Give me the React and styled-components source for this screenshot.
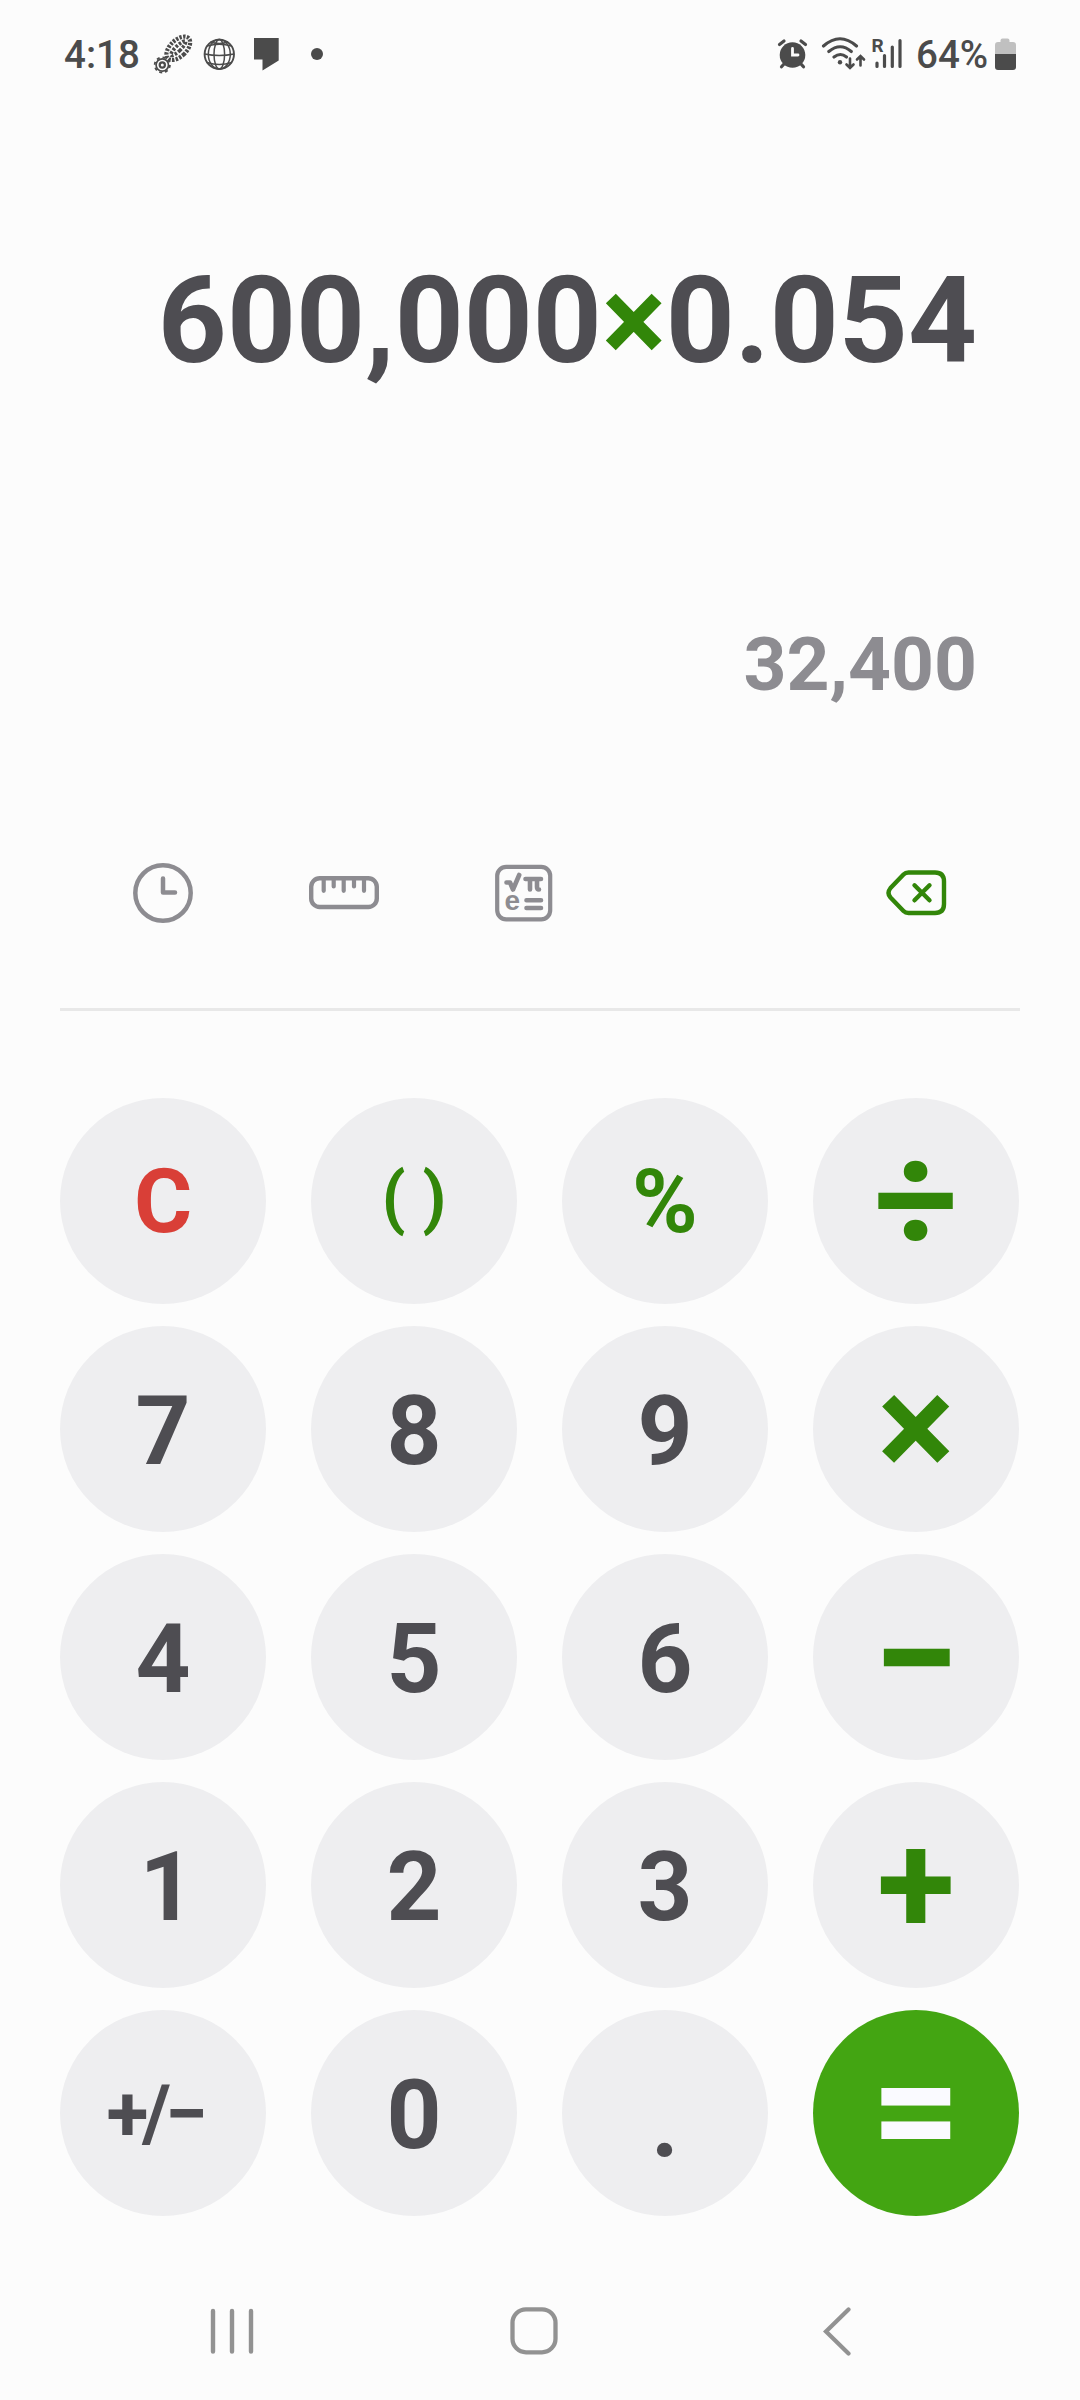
import styled, { createGlobalStyle } from 'styled-components'

const colors = {
  page: '#fcfcfc',
  key: '#eeeef0',
  ink: '#4e4d52',
  status: '#4b4b4b',
  muted: '#8d8c91',
  nav: '#929292',
  green: '#328609',
  equals: '#43a512',
  red: '#d93f37',
  line: '#e8e8e8',
}

const GlobalStyle = createGlobalStyle`
  * {
    box-sizing: border-box;
  }
  body {
    margin: 0;
    background: ${colors.page};
    font-family: Roboto, sans-serif;
  }
  svg {
    display: block;
    flex: none;
  }
`

const Screen = styled.main`
  display: flex;
  flex-direction: column;
  width: 1080px;
  height: 2400px;
  overflow: hidden;
  background: ${colors.page};
`

const StatusBar = styled.header`
  display: flex;
  justify-content: space-between;
  height: 108px;
  padding: 30px 64px 0;
  color: ${colors.status};
`

const StatusGroup = styled.div`
  display: flex;
  height: 48px;
`

const StatusText = styled.span`
  width: ${({ $width }) => $width}px;
  font-size: 38.5px;
  font-weight: 500;
  line-height: 49px;
  white-space: nowrap;
`

const Display = styled.section`
  height: 720px;
  padding: 138px 103px 0 0;
  text-align: right;
  font-weight: 700;
`

const Expression = styled.div`
  height: 150px;
  font-size: 120.4px;
  line-height: 150px;
  color: ${colors.ink};
`

const Operator = styled.span`
  color: ${colors.green};
`

const Result = styled.div`
  margin-top: 218px;
  font-size: 75px;
  line-height: 100px;
  color: ${colors.muted};
`

const Toolbar = styled.div`
  display: flex;
  align-items: center;
  height: 130px;
  padding: 0 126px;
`

const Tool = styled.button`
  display: flex;
  align-items: center;
  justify-content: center;
  width: 74px;
  height: 74px;
  margin: 0 ${({ $gap }) => $gap || 0}px 0 0;
  padding: 0;
  border: 0;
  background: none;
  color: ${({ $accent }) => ($accent ? colors.green : colors.muted)};

  &:last-child {
    margin-left: auto;
  }
`

const Divider = styled.hr`
  width: 960px;
  height: 3px;
  margin: 50px auto 87px;
  border: 0;
  background: ${colors.line};
`

const Keypad = styled.div`
  display: grid;
  grid-template-columns: repeat(4, 206px);
  grid-auto-rows: 206px;
  gap: 22px 45px;
  padding-left: 60px;
`

const Key = styled.button`
  display: flex;
  justify-content: center;
  padding: 0;
  border: 0;
  border-radius: 50%;
  background: ${({ $fill }) => $fill || colors.key};
  color: ${({ $color }) => $color || colors.ink};
  font-family: inherit;
  font-size: ${({ $size }) => $size || 96}px;
  font-weight: 700;
  letter-spacing: ${({ $spacing }) => $spacing || 0}px;
  text-indent: ${({ $indent }) => $indent || 0}px;
  line-height: ${({ $line }) => $line || 210}px;
  white-space: pre;
`

const NavBar = styled.nav`
  display: flex;
  align-items: center;
  justify-content: space-between;
  height: 50px;
  margin-top: 90px;
  padding: 0 228px 0 210px;
  color: ${colors.nav};
`

const KEYS = [
  { label: 'C', color: colors.red, size: 89, line: 208 },
  { label: '( )', color: colors.green, size: 68, line: 201 },
  { label: '%', color: colors.green, size: 89, line: 208 },
  { label: '÷', color: colors.green, size: 148, line: 205 },
  { label: '7' },
  { label: '8' },
  { label: '9' },
  { label: '×', color: colors.green, size: 145, line: 203 },
  { label: '4' },
  { label: '5' },
  { label: '6' },
  { label: '−', color: colors.green, size: 156, line: 210 },
  { label: '1', indent: 8 },
  { label: '2' },
  { label: '3' },
  { label: '+', color: colors.green, size: 143, line: 205 },
  { label: '+/−', size: 77, line: 208, spacing: -6, indent: -18 },
  { label: '0' },
  { label: '.', line: 226 },
  { label: '=', color: '#fafaff', fill: colors.equals, size: 157, line: 201 },
]

const NotificationIcons = () => (
  <svg width="186" height="48" viewBox="148 30 186 48" fill="none" stroke="currentColor">
    {/* boot print */}
    <g transform="translate(178.300 48.300) rotate(46)">
      <ellipse rx="8.200" ry="14.500" strokeWidth="4.200" strokeDasharray="2.400 1.300" />
      <ellipse rx="2.600" ry="10" strokeWidth="3.600" strokeDasharray="2.600 1.500" />
    </g>
    {/* gear */}
    <circle cx="162.300" cy="65" r="6.200" strokeWidth="1.700" />
    <circle cx="162.300" cy="65" r="7.600" strokeWidth="1.800" strokeDasharray="3 2.970" />
    <circle cx="162.300" cy="65" r="2.600" strokeWidth="2.200" />
    {/* globe */}
    <g strokeWidth="1.500">
      <circle cx="219.300" cy="54.300" r="14.700" strokeWidth="1.900" />
      <ellipse cx="219.300" cy="54.300" rx="5.300" ry="14.700" />
      <ellipse cx="219.300" cy="54.300" rx="11" ry="14.700" />
      <path d="M204.600 54q14.700 3 29.400 0M207 46q12.300-3.500 24.600 0M207 62.500q12.300 4 24.600 0M210.500 42q8.800 3 17.600 0" />
    </g>
    <path d="M254 38h24.700v22.500L262.500 70.500V59.500H254z" fill="currentColor" stroke="none" />
    <circle cx="317" cy="54" r="6" fill="currentColor" stroke="none" />
  </svg>
)

const SystemIcons = () => (
  <svg width="142" height="48" viewBox="774 30 142 48" fill="none" stroke="currentColor" strokeLinecap="round">
    {/* alarm */}
    <circle cx="792.500" cy="55" r="12.800" fill="currentColor" stroke="none" />
    <path d="M779.500 44.500l4.500-3.500M805.500 44.500l-4.500-3.500M784 64l-2.500 2.800M801 64l2.500 2.800" strokeWidth="3.200" />
    <path d="M792.500 48.500v6.500h5.500" stroke={colors.page} strokeWidth="2.800" />
    {/* wifi */}
    <path d="M823.500 46q16.500-14.500 33 0M828.800 51.500q11.500-9.500 22.500 0M834 57q6.500-5 12.500 0" strokeWidth="3.100" />
    <circle cx="840" cy="62.300" r="2.200" fill="currentColor" stroke="none" />
    <path d="M850 58.500v9M846.500 64.500l3.500 3.500 3.500-3.500M860.500 65.500v-9M857 59.500l3.500-3.500 3.500 3.500" strokeWidth="2.600" />
    {/* signal */}
    <path d="M877 63v3.500M884.500 55.500v11M892.300 47v19.500M900 40.500v26" strokeWidth="3.200" />
    <text x="871.500" y="52.300" fontSize="19" fontWeight="700" fill="currentColor" stroke="none">R</text>
  </svg>
)

const BatteryIcon = () => (
  <svg width="22" height="48" viewBox="994 30 22 48">
    <path d="M995 54V45q0-3 3-3h2.500v-1.500q0-2 2-2h5q2 0 2 2V42h3.500q3 0 3 3v9z" fill="#c0c0c0" />
    <path d="M995 54h21v13q0 3-3 3h-15q-3 0-3-3z" fill={colors.status} />
  </svg>
)

const HistoryIcon = () => (
  <svg width="60" height="60" viewBox="0 0 60 60" fill="none" stroke="currentColor" strokeWidth="4.500">
    <circle cx="30" cy="30" r="27.700" />
    <path d="M30 15.500V29.500H42" strokeLinecap="round" strokeLinejoin="round" />
  </svg>
)

const RulerIcon = () => (
  <svg width="70" height="34" viewBox="0 0 70 34" fill="none" stroke="currentColor" strokeWidth="4.400">
    <rect x="2.200" y="2.200" width="65.600" height="28.800" rx="8.500" />
    <path d="M14.700 3v11.800M24.700 3v7.500M34.700 3v11.800M45 3v7.500M55 3v11.800" strokeLinecap="round" strokeWidth="4.200" />
  </svg>
)

const ScientificIcon = () => (
  <svg width="58" height="58" viewBox="0 0 58 58" fill="none" stroke="currentColor" strokeWidth="4.600" strokeLinecap="round" strokeLinejoin="round">
    <rect x="2.200" y="2.800" width="53" height="52.500" rx="9" strokeWidth="4.200" />
    <path d="M11.500 18.500h3.500l3 7 6.200-14.500M30.500 15h15.500M35 16v9.500M42 16v7q0 2.500 2 2.500" />
    <path d="M31.500 36.300h14.500M31.500 44h14.500" />
    <text x="9.500" y="46.300" fontSize="28" fontWeight="700" fill="currentColor" stroke="none">e</text>
  </svg>
)

const BackspaceIcon = () => (
  <svg width="62" height="48" viewBox="0 0 62 48" fill="none" stroke="currentColor" strokeWidth="4.400" strokeLinecap="round" strokeLinejoin="round">
    <path d="M22.500 3.500H49q9 0 9 9v22.500q0 9-9 9H22.500q-3 0-5-2L4.500 28.500q-4-4.500 0-9.500L17.500 5.500q2-2 5-2z" />
    <path d="M28.500 16.300l15 15M43.500 16.300l-15 15" />
  </svg>
)

const RecentsIcon = () => (
  <svg width="44" height="50" viewBox="0 0 44 50" stroke="currentColor" strokeWidth="4.400" strokeLinecap="round">
    <path d="M3 5v40.500M22 5v40.500M41 5v40.500" />
  </svg>
)

const HomeIcon = () => (
  <svg width="58" height="50" viewBox="0 0 58 50" fill="none" stroke="currentColor" strokeWidth="4.300">
    <rect x="3.500" y="3.300" width="43" height="43" rx="13.500" />
  </svg>
)

const BackIcon = () => (
  <svg width="30" height="50" viewBox="0 0 30 50" fill="none" stroke="currentColor" strokeWidth="4.200" strokeLinecap="round">
    <path d="M26.500 3.500L4 25.500l22.500 22" />
  </svg>
)

const App = () => (
  <>
    <GlobalStyle />
    <Screen>
      <StatusBar>
        <StatusGroup>
          <StatusText $width={84}>4:18</StatusText>
          <NotificationIcons />
        </StatusGroup>
        <StatusGroup>
          <SystemIcons />
          <StatusText $width={78}>64%</StatusText>
          <BatteryIcon />
        </StatusGroup>
      </StatusBar>

      <Display>
        <Expression>
          600,000<Operator>×</Operator>0.054
        </Expression>
        <Result>32,400</Result>
      </Display>

      <Toolbar>
        <Tool $gap={107} aria-label="History"><HistoryIcon /></Tool>
        <Tool $gap={106} aria-label="Unit converter"><RulerIcon /></Tool>
        <Tool aria-label="Scientific mode"><ScientificIcon /></Tool>
        <Tool $accent aria-label="Backspace"><BackspaceIcon /></Tool>
      </Toolbar>
      <Divider />

      <Keypad>
        {KEYS.map((key) => (
          <Key
            key={key.label}
            $color={key.color}
            $fill={key.fill}
            $size={key.size}
            $line={key.line}
            $spacing={key.spacing}
            $indent={key.indent}
          >
            {key.label}
          </Key>
        ))}
      </Keypad>

      <NavBar>
        <RecentsIcon />
        <HomeIcon />
        <BackIcon />
      </NavBar>
    </Screen>
  </>
)

export default App
